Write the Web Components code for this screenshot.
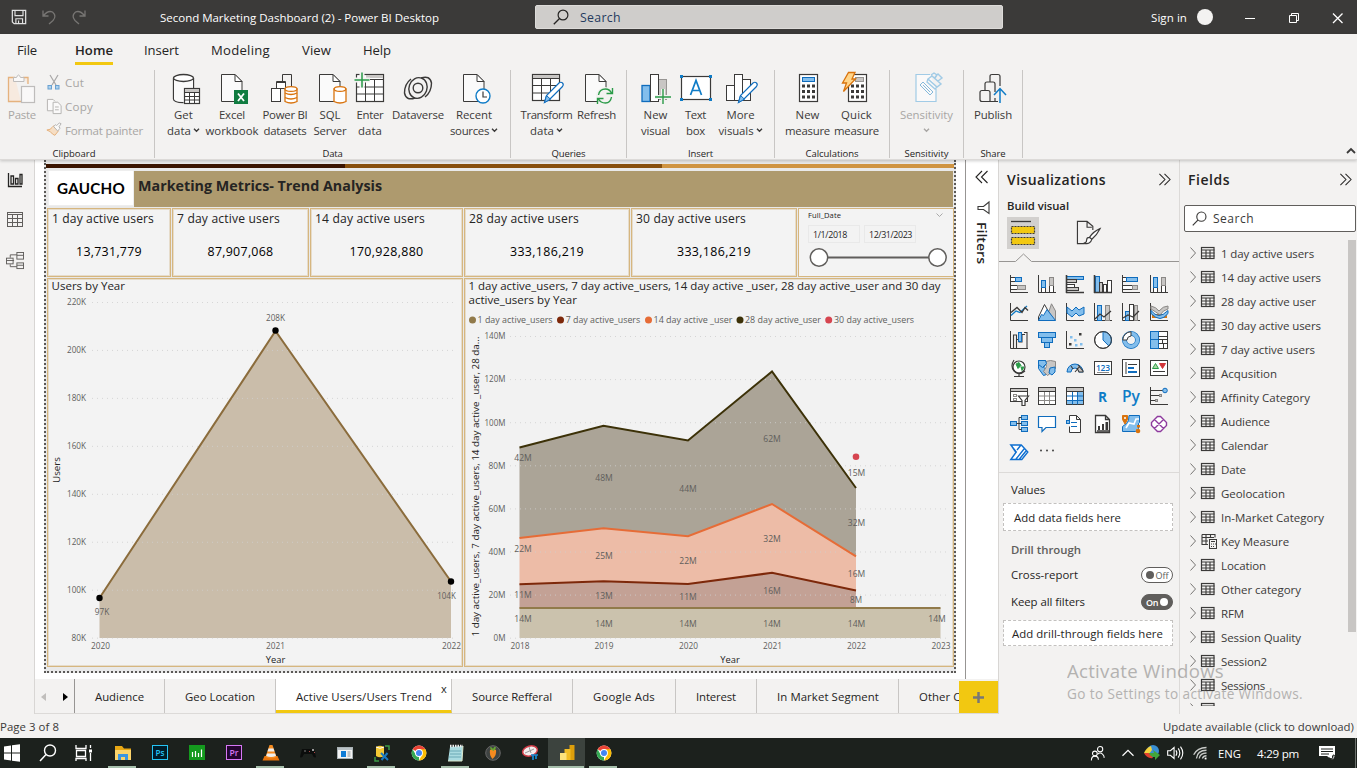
<!DOCTYPE html>
<html lang="en">
<head>
<meta charset="utf-8">
<title>Second Marketing Dashboard (2) - Power BI Desktop</title>
<style>
html,body{margin:0;height:768px;overflow:hidden;background:#f3f2f1}
body{font-family:"Open Sans","Noto Sans",sans-serif;font-size:11.5px;color:#252423}
</style>
</head>
<body>
<pb-window>
  <title-bar slot="title"></title-bar>
  <ribbon-bar slot="ribbon"></ribbon-bar>
  <view-rail slot="main"></view-rail>
  <report-area slot="main"></report-area>
  <viz-pane slot="main"></viz-pane>
  <fields-pane slot="main"></fields-pane>
  <status-bar slot="status"></status-bar>
  <task-bar slot="tasks"></task-bar>
  <activation-note slot="over"></activation-note>
</pb-window>
<script>
const K='#3b3a39',B='#0f6cbd',L='#83beec',G='#c8c6c4',W='#fff',O='#d9730d';
const r=(x,y,w,h,f='none',s=K,sw=1)=>`<rect x="${x}" y="${y}" width="${w}" height="${h}" fill="${f}" stroke="${s}" stroke-width="${sw}"/>`;
const p=(d,s=K,f='none',sw=1)=>`<path d="${d}" fill="${f}" stroke="${s}" stroke-width="${sw}"/>`;
const c=(x,y,q,f='none',s=K,sw=1)=>`<circle cx="${x}" cy="${y}" r="${q}" fill="${f}" stroke="${s}" stroke-width="${sw}"/>`;
const axis=p('M.5 0V17.5H18');
const page=(x)=>p(`M${x} 2.5h13.5l7 7V29.5h-20.5z`,K,'#fafafa')+p(`M${x+13.5} 2.5v7h7z`,K,'#fff');
const pencil=p('M13.5 30.5l2-7L28 11q2-1.500 3.500 0q1.500 1.500 0 3.500L19 27z',B,'#fff',1.2)+p('M13.500 30.500l2-7 4 3.700z',B,L);
const ICONS={
 save:[18,p('M1.500 1.500h15v15h-13l-2-2z','#e1e1e1','none',1.4)+p('M4.500 1.500v6h9v-6M5.500 16.500v-5.500h7.500v5.500M8.500 13v3','#e1e1e1','none',1.3)],
 undo:[16,p('M2 1.500v5.500h5.500M2.500 6.500Q7 1 11.500 3Q16 7 12 11.500L8 15','#777573','none',1.3)],
 redo:[16,p('M14 1.500v5.500h-5.500M13.500 6.500Q9 1 4.500 3Q0 7 4 11.500L8 15','#777573','none',1.3)],
 search:[16,c(10,6,4.900,'none','currentColor',1.2)+p('M6.500 9.500L.8 15.300','currentColor','none',1.3)],
 paste:[32,`<g opacity=".5">`+p('M9 5.500H2.500v24H15M22 12V5.500h-5',O,'#fbe3cf',1.3)+p('M7.500 9.500v-4h3q2-5 4 0h3.500v4z','#8a8886','#fff')+r(15.500,14.500,13,16,'#fff','#8a8886',1.2)+`</g>`],
 cut:[16,`<g opacity=".6">`+p('M4 1l6 10M12 1L6 11','#777','none',1.2)+r(2,11.500,3.500,3.500,L,B)+r(9.500,11.500,3.500,3.500,L,B)+`</g>`],
 copy:[18,`<g opacity=".6">`+p('M8 13.500H1.500V1.500h6l2 2','#8a8886','#fff')+p('M7.500 4.500h5l3.500 3.500v8.500H7.500zM9.500 9.500h4M9.500 12.500h4','#8a8886','#fff')+`</g>`],
 brush:[18,`<g opacity=".55">`+p('M9 4l5 6-4 5q-3-1-5-4L1 9q4 0 6-3z',O,'#f9cfa0')+p('M8.500 5L13 10l3-3-1.500-1.500L17 2l-2-1-3 3-1-1z','#777','#fff')+`</g>`],
 getdata:[32,p('M5.500 6v21q0 3.500 10 3.500M25.500 6v10','#3b3a39','none',1.3)+`<path d="M6 6v21q2 3 10 3V17h9V6z" fill="#fafafa"/>`+`<ellipse cx="15.500" cy="6" rx="10" ry="3.500" fill="#fff" stroke="${K}" stroke-width="1.300"/>`+r(16.500,16.500,15,15,'#fff',K,1.2)+r(17,17,14,3,G,'none')+p('M16.500 20.500h15M16.500 24.500h15M16.500 28h15M21.500 20v11M26.500 20v11')],
 excel:[32,page(5.5)+r(18,18,14,14,'#107c41','none')+p('M22 21.500l6 7.500M28 21.500l-6 7.500','#fff','none',1.8)],
 pbids:[32,r(2.500,16.500,9,13,'#fff')+r(7.500,10.500,9,6,'#fff')+p('M7.500 16v-6.500h9V30M13.500 9V2.500h9v12M11.500 16v14')+`<path d="M16 17v12.500q6 3 12 0V17z" fill="#fff" stroke="${O}" stroke-width="1.300"/><ellipse cx="22" cy="17" rx="6" ry="2.400" fill="#fff" stroke="${O}" stroke-width="1.300"/>`+p('M16 21q6 3 12 0M16 25.500q6 3 12 0',O,'none',1.3)],
 sql:[32,page(5.5)+`<path d="M20 17v12.500q6 3 12 0V17z" fill="#fff" stroke="${O}" stroke-width="1.300"/><ellipse cx="26" cy="17" rx="5.800" ry="2.400" fill="#fff" stroke="${O}" stroke-width="1.300"/>`],
 enter:[32,r(2.500,2.500,27,27,'#fff',K,1.2)+r(12,3,17,3,G,'none')+p('M2.500 15h27M2.500 22h27M11.500 7v23M20.500 7v23M12 7.500h18')+`<path d="M0 8h16M8 0v16" stroke="#f3f2f1" stroke-width="5"/>`+p('M.5 8h15M8 .5v15','#2a9b48','none',1.5)],
 dataverse:[32,`<ellipse cx="16" cy="16" rx="9" ry="10.500" fill="none" stroke="${K}" stroke-width="1.400" transform="rotate(20 16 16)"/>`+c(16,16,4.800,'none',K,1.400)+p('M19 6Q28 3 29.500 11Q29.500 20 23 25M13 26Q4 29 2.500 21Q2.500 12 9 7',K,'none',1.400)],
 recent:[32,page(5.5)+c(25,24,7,'#fff','#0f7cc7',1.4)+p('M25 19.500V25h4',K,'none',1.2)],
 transform:[32,r(1.500,2.500,27,26,'#fff',K,1.2)+r(2,3,26,3,G,'none')+p('M1.500 6.500h27M1.500 13.500h27M1.500 21h18M10.500 7v21M19.500 7v14')+pencil],
 refresh:[32,page(4.5)+`<circle cx="24" cy="24" r="9" fill="#f3f2f1"/>`+p('M17.500 23q1-6 7-6q4 0 6 4M31.500 16v5.500h-6M30.500 25q-1 6-6 6q-5 0-7-4M16.500 32v-5.500h6','#2a9b48','none',1.4)],
 newvisual:[32,r(2,13.500,8,16,L,B,1.300)+r(18.500,7.500,8,20,G,'#979593')+r(10.500,2.500,8,27,'#fff')+`<path d="M15 25h16M23 17v15" stroke="#f3f2f1" stroke-width="4"/>`+p('M15 25h16M23 17v15','#2a9b48','none',1.4)],
 textbox:[32,r(1.500,4.500,29,23,'#fff',K,1.200)+[[0,3],[29,3],[0,26],[29,26]].map(a=>r(a[0],a[1],3,3,'#0f7cc7','none')).join('')+p('M10.500 23L16 8.500 21.500 23M12.300 18.500h7.400','#0f7cc7','none',1.700)],
 more:[32,r(1.500,13.500,8,15,'#fff')+r(17.500,7.500,8,21,'#fff')+r(9.500,2.500,8,26,'#fff')+pencil],
 calc:[32,r(7.500,2.500,18,27,'#fff',K,1.200)+r(10.500,5.500,12,4,L,B)+[0,1,2].map(i=>[0,1,2].map(j=>r(10+j*5,12.500+i*5.500,3,3,K,'none')).join('')).join('')],
 quick:[32,r(7.500,2.500,18,27,'#fff',K,1.200)+r(14.500,5.500,8,4,G,'#979593')+[0,1,2].map(i=>[0,1,2].map(j=>r(10+j*5,12.500+i*5.500,3,3,K,'none')).join('')).join('')+p('M7.500.5h6.500l-3 6.500h3.500L2.500 19.500l3-8.500H1.500z',O,'#ffd58a',1.300)],
 sens:[32,`<g opacity=".6">`+p('M19 2.500H5v27h20V17','#6bb2df','#fff',1.200)+p('M9 13l3-3 10 10-3 3zM12 13l7 7','#3d94cc')+p('M17 7l4-3 9 8-4 3zM20 3l3-2 3 2-2 3M27 9l4-3-4-4-3 3M17 7l-1 3 8 7 2-2','#6bb2df','none',1.400)+`</g>`],
 publish:[32,p('M5 29.500q-2 0-2-2v-7q0-2 2-2h6q2 0 2 2v9zM8 18v-6q0-2 2-2h6q2 0 2 2v8M13 10V4.500q0-2 2-2h6q2 0 2 2V14M13 29.500h8M18 26v3.500',K,'none',1.200)+p('M23 31V17M17 23l6-6.500 6 6.500','#0f7cc7','none',1.500)],
 vreport:[16,p('M1.500 1v13.500H15M4 12V4h2.500v8zM8.500 12V6.500H11V12zM13 12V2.500h2V12z','#252423','none',1.300)],
 vtable:[16,r(.5,.5,15,14,'none','#605e5c')+p('M.5 2.500h15M.5 6.500h15M.5 10.500h15M5.500 2.500v12M10.500 2.500v12','#605e5c')],
 vmodel:[19,r(.5,6.500,7,6,'none','#605e5c')+r(11.500,.5,7,7,'none','#605e5c')+r(11.500,11.500,7,6,'none','#605e5c')+p('M.5 9h7M11.500 3.500h7M11.500 14h7M7.500 9h1M4.500 6V3h7M4.500 13v2.500h7','#605e5c')],
 chevR:[14,p('M1.500 1l6 6-6 6M7 1l6 6-6 6','#252423','none',1.100)],
 chevL:[14,p('M7 1L1 7l6 6M12.500 1l-6 6 6 6','#252423','none',1.100)],
 funnelR:[14,p('M12 1v11.500L6.500 8.500H1v-3h5.500z',K,'none',1.100)],
 caretUp:[10,p('M1 7l4-4 4 4',K,'none',1.800)],
 tablei:[14,r(.5,1.500,12.500,11,'none',K,1.200)+p('M.5 4h13M.5 7h13M.5 10h13M5 4v9M9 4v9',K,'none',1.100)],
 measi:[17,p('M1 1.500h13v3M1 1.500v10h6M1 4.500h12M1 8h6M5 2v9M9.500 2v3',K,'none',1.100)+r(8.500,6.500,7,9,'#f3f2f1')+p('M10 8.500h4M10 11h1M12 11h1M14 11h1M10 13.500h1M12 13.500h1')],
 arrow:[12,p('M3.500.500l5 5.500-5 5.500','#797775')],
 build:[26,p('M1 1.500h20',K,'none',1.300)+`<rect x="1.500" y="6.500" width="23" height="7" fill="#f2c811" stroke="${K}" stroke-width="1.200" stroke-dasharray="2 1"/><rect x="1.500" y="17.500" width="23" height="7" fill="#f2c811" stroke="${K}" stroke-width="1.200" stroke-dasharray="2 1"/>`],
 format:[26,p('M9 24.500H1.500V1.500h10l6 5v4M11.500 1.500v6h5',K,'none',1.200)+p('M25 9q-7 3-11 9l2.500 2Q22 15 25 9zM14 18q-3 0-3 3t-3 3q7 2 8.500-4',K,'#fff',1.200)],
};
const V=[
 axis+r(.5,2.500,5,4,W)+r(5.500,2.500,6,4,L,B)+r(.5,10.500,7,4,W)+r(7.500,10.500,8,4,G,'#8a8886'),
 axis+r(3.500,12.500,4,5,W)+r(3.500,5.500,4,7,L,B)+r(11.500,10.500,4,7,W)+r(11.500,2.500,4,8,G,'#8a8886'),
 axis+r(.5,1.500,17,3,L,B)+r(.5,4.500,10,3,G)+r(.5,9.500,8,3,W)+r(.5,12.500,12,3,G)+p('M0 17.500H18M.5 0v18',K,'none',1.600),
 axis+r(1.500,1.500,4,16,L,B)+r(5.500,7.500,3,10,G)+r(9.500,9.500,3,8,W)+r(13.500,5.500,4,12,W)+p('M0 17.500H18M.5 0v18',K,'none',1.600),
 axis+r(.5,2.500,4,4,W)+r(4.500,2.500,11,4,L,B)+r(.5,10.500,10,4,W)+r(10.500,10.500,5,4,G,'#8a8886'),
 axis+r(3.500,12.500,4,5,W)+r(3.500,2.500,4,10,L,B)+r(11.500,10.500,4,7,W)+r(11.500,2.500,4,8,G,'#8a8886'),
 axis+p('M1 12.500l5-4.500 4 1.500 7-6.500','#0f7cc7','none',1.300)+p('M1 9.500l6-5 5 5 3-5 3 3',K,'none',1.300),
 p('M8 17L13.500 .8 17.500 8V17z','#8a8886',G)+p('M.5 14L6.500 1.500l8 14-3 2H.5z',K,'#fff')+p('M.5 17.500l3-6 2 1 3.500-6 8.500 11z',B,L),
 axis+p('M1 4l5 4 4-4 3 3 5-3v7l-5 2-3-3-4 4-5-4z',B,L),
 axis+r(3.500,2.500,4,15,L,B)+r(11.500,2.500,4,15,G,'#8a8886')+p('M1 16l5-5 4 3 7-6',K,'none',1.300),
 axis+r(3.500,8.500,4,9,L,B)+r(7.500,1.500,4,16,W)+r(12.500,2.500,3,15,G,'#8a8886')+p('M1 15l5-3 5 2 6-6',K,'none',1.300),
 axis+r(2,11,15,4,O,'none')+p('M1 3q5 1 8 5q4-5 9-5v3q-5 1-8 6q-4-3-9-6z','#8a8886',G)+p('M1 7.500q4 5 8 5t9-5v3q-4 5-8 5t-9-5z',B,L),
 axis+p('M3.500 17V4h3v13M9 3.500h3V11H9zM14 1.500h3V17M6.500 8.500h3M12 3.500h3',K,'none',1.100)+r(8.500,1.500,3,9,L,B),
 r(.5,1.500,17,5,L,B)+r(3.500,6.500,11,5,L,B)+r(6.500,11.500,5,5,L,B),
 axis+[[3,12,K],[4,5,L],[8,8,L],[13,2,K],[14,12,L],[9,13,L]].map(a=>r(a[0],a[1],2.500,2.500,a[2],'none')).join(''),
 c(9,9,8.400,W)+p('M9 9V.6A8.400 8.400 0 0 1 14.900 15z',B,L)+c(9,9,8.400),
 c(9,9,6.500,'none',B,5)+c(9,9,6.500,'none',L,3.600)+p('M9 .8A8.300 8.300 0 0 0 .8 9H5A4.300 4.300 0 0 1 9 5z',K,'#fff'),
 r(.5,.5,17,17,W)+r(.5,.5,8,8,L,B)+r(.5,8.500,8,9,L,B)+p('M8.500 8.500h9M12.500 8v4.500M8.500 5.500h9M8.500 12.500h9M13.500 12.500v5'),
 c(9,8,6,W,K,1.200)+p('M6 5l3-1.500 2 3-3 3zM11 8h3l-2 3.500z','#2a9b48','#2a9b48')+p('M4 1Q0 7 4 12Q9 17 15 12M9 14.500V17M4 17.500h10',K,'none',1.200),
 p('M.500 1.500h7l1 3-3 4 4 2 2 4-6 2-5-7z',B,L)+p('M7.500 2.500l5-1 5 1v7l-4 4-4 3-4-4 3-5z','#8a8886',G)+p('M12 9l5-1v5l-3 3-3-2z',B,L)+p('M.500 1.500h7l1 3-4 4-4-3z',B,L),
 p('M1 13a8 8 0 0 1 16 0h-4a4 4 0 0 0-8 0z',B,L)+p('M5 7l2 3M9 13l5-6M12 6l5 6v1h-4l-2-4',K,G,1.100),
 r(.5,2.500,17,13,W)+`<text x="2" y="11.500" font-size="8.500" font-weight="600" fill="${B}" textLength="14">123</text>`+p('M3 13.500h12','#8a8886'),
 r(.5,.5,17,17,W)+p('M4 3v12M6 5.500h9',K)+p('M6 9h6M6 13h9',B,'none',2),
 r(.5,1.500,17,15,W)+p('M2.500 9.500l3-5 3 5z','#2a9b48','#a8d8a0')+p('M9.500 4.500h6l-3 5z','#d13438','#d13438')+p('M3 12.500h12'),
 r(.5,1.500,17,13,W)+r(1,2,16,2.500,G,'none')+p('M.5 4.500h17')+r(3.500,7.500,3,2,'none','#8a8886')+r(3.500,11.500,3,2,'none','#8a8886')+p('M8.500 9h10l-3.500 4.500v5h-3v-5z',K,'#fff',1.200),
 r(.5,.5,17,17,W)+r(1,1,16,3,G,'none')+p('M1 9h16M1 13.500h16M6.500 4.500v13M11.500 4.500v13','#8a8886')+p('M.5 4.500h17'),
 r(.5,.5,17,17,W)+r(1,1,16,3,G,'none')+r(12,5,5,12,L,'none')+r(1,13,16,4,L,'none')+p('M1 9h16M1 13.500h16M6.500 4.500v13M11.500 4.500v13',B)+p('M.5 4.500h17'),
 `<text x="4" y="15" font-size="15" font-weight="700" fill="#0f7cc7" textLength="9" lengthAdjust="spacingAndGlyphs">R</text>`,
 `<text x="0" y="14.500" font-size="15.500" font-weight="600" fill="#0f7cc7" textLength="18" lengthAdjust="spacingAndGlyphs">Py</text>`,
 axis+p('M1 3.500h12M1 8.500h9M1 13.500h5',K)+c(15,3.500,2.300,L,B)+r(9.500,7.500,2,2,G,'#8a8886')+r(5.500,12.500,2,2,G,'#8a8886'),
 r(.5,6.500,6,4,L,B)+r(11.500,.5,6,4,L,B)+r(11.500,6.500,6,4,L,B)+r(11.500,12.500,6,4,L,B)+p('M6.500 8.500h5M9 8.500v-6h2.500M9 8.500v6h2.500'),
 p('M.500 1.500h17v11H8l-4 4v-4h-3.500z',B,'#fff',1.200),
 p('M3.500 6V.500h7l4 4v13h-11v-6M10.500.500v4h4',K,'#fff')+r(.5,5.500,3,3,L,B)+p('M5 7.500h6M5 11.500h6',B),
 p('M1.500.500h10l4 4v13h-14zM11.500.500v4h4',K,'#fff',1.300)+r(4,11,2,4,K,'none')+r(8,9,2,6,K,'none')+r(11.500,7,2.500,8,K,'none')+p('M3 16h12',K,G,1.500),
 p('M7 .5h10.500v7l-1 1v5l-3 3H.500v-5l4-3 2-3z',B,L)+p('M4 13l3-5 5 1 2-5h3','#fff','none',1.600)+p('M3 9L.500 4.500V.500h5V4.500z',O,O)+c(3,3,1,'#fff','none')+c(16,16,2.300,O,'none')+r(15,10,3,2.500,O,'none'),
 p('M7.500 1.500h3l6 6v3l-6 6h-3l-6-6v-3zM4.500 4.500L13.500 13.500M13.500 4.500L4.500 13.500','#8e3a9e','#fff',1.400),
 p('M.800 2h10.500l6.500 7-6 7.500H.800l5.500-7.500zM6 16l8-10M1 2l5 7.500M9.500 16L16 8M11 2L7 7','#0f6fd0','#fff',1.400),
 `<circle cx="3" cy="7.500" r="1" fill="#444"/><circle cx="9" cy="7.500" r="1" fill="#444"/><circle cx="15" cy="7.500" r="1" fill="#444"/>`
];
V.forEach((s,i)=>ICONS['v'+i]=[18,s]);
const chrome=`<circle cx="12" cy="12" r="7.400" fill="#fff"/><path d="M12 12L5.600 8.300A7.400 7.400 0 0 1 18.400 8.300z" fill="#ea4335"/><path d="M12 8.300h6.400A7.400 7.400 0 0 1 12 19.400L15.200 13.800z" fill="#fbbc05"/><path d="M5.600 8.300L8.800 13.800 12 15.700v3.700A7.400 7.400 0 0 1 5.600 8.300z" fill="#34a853"/><circle cx="12" cy="12" r="3.900" fill="#fff"/><circle cx="12" cy="12" r="3" fill="#4285f4"/>`;
const sq=(bg,st,t)=>r(4.500,4.500,15,14,bg,st)+`<text x="7.500" y="15" font-size="8.500" font-weight="600" fill="${st}" textLength="9" lengthAdjust="spacingAndGlyphs">${t}</text>`;
const T={
 win:'<path d="M4 5.500l7-1v7H4zM12 4.300l8-1.100v8.300h-8zM4 12.500h7v7l-7-1zM12 12.500h8v8.300l-8-1.100z" fill="#fff"/>',
 find:c(14,9.500,5.500,'none','#fff',1.400)+p('M10 13.500L4 20','#fff','none',1.500),
 view:p('M4 4v3.500h10V4M4.500 9.500h9v6h-9zM4 20v-2.500h10V20M18.500 4v3M18.500 12v8','#fff','none',1.300)+r(17,8.500,3,3,'#fff','none'),
 folder:'<path d="M4 5h7l2 2.500h7V19H4z" fill="#e8a815"/><path d="M4 9h16v10H4z" fill="#fcd46b"/><path d="M7 13h10v6h-3v-3h-4v3H7z" fill="#3b96e2"/>',
 ps:sq('#001d2b','#25c4f5','Ps'),
 bars:r(4,4,16,15,'#149a1e','none')+p('M7.500 11v5M10.500 10v6M13.500 12v4M16.500 8.500v7.500','#fff','none',1.200),
 pr:sq('#250530','#d678f5','Pr'),
 vlc:'<path d="M5.500 15h13l2 4.500h-17z" fill="#e8740c"/><path d="M10.500 4h3l4 12q-5.500 3-11 0z" fill="#f58b1f"/><path d="M9.500 7.500h5l1 3h-7zM8 12.500h8.200l.8 2.500q-5 2-9.800 0z" fill="#eee"/>',
 pad:'<path d="M6 8h12l2 8q-2 2-4-3H8q-2 5-4 3z" fill="#0b0d0c"/><path d="M16 8h2v2h-2z" fill="#999"/><path d="M13 10h1v1h-1zM18 11h1v1h-1z" fill="#a44"/><path d="M8 9h2v2H8z" fill="#444"/>',
 app:r(4.500,6.500,15,11,'#f4f4f4','#a9b2b5')+r(5,7,14,2,'#b9c2c6','none')+r(8,10,5,6,'#0f7cd6','none')+p('M14.500 11h3M14.500 13h3M14.500 15h3','#8a9499'),
 tools:'<path d="M6 6q4-2.500 8 0v9q-4 2.500-8 0z" fill="#f5c934"/><path d="M6 6q4 2.500 8 0" stroke="#fff" fill="none"/><path d="M11 12l7 7M17.500 12l-6 7" stroke="#1b7ac2" stroke-width="2"/><path d="M15 5h4v4M9 20H5v-4" stroke="#3b9b45" stroke-width="1.500" fill="none"/>',
 chrome, chrome2:chrome,
 note:'<path d="M6 6l13-1-1 15H4z" fill="#a9dbe0"/><path d="M6 10h11M6 13h11M5 16h12" stroke="#6ba9b5"/><path d="M6 5h13" stroke="#eee" stroke-width="2.500" stroke-dasharray="1.500 1"/><path d="M4 20h14l1-15" stroke="#dae5c9" fill="none"/>',
 fl:c(12,12,7.300,'#3e4342','#666')+'<path d="M9 9q3-2 6 0q1 5-3.500 9q-3.500-4-2.500-9z" fill="#f58a1f"/><path d="M9 6q2 0 3 2q2-4 3-1l-2.500 3-3-2z" fill="#66a832"/>',
 snip:'<ellipse cx="12" cy="10" rx="7.500" ry="5" transform="rotate(-15 12 10)" fill="#f5eded" stroke="#cf3c47" stroke-width="1.500"/><path d="M11 6l2 6M7 12l9-4" stroke="#999"/><path d="M13 14h7M15 14v5M18 14v4" stroke="#1788d0" stroke-width="1.700"/>',
 pbi:'<path d="M14.500 4h5v15h-5z" fill="#dd9f0b"/><path d="M9.500 8h6v11h-6z" fill="#f1bd24"/><path d="M5 12h6.500v7H5z" fill="#fce27b"/>',
 people:c(15,7,3,'none','#fff',1.200)+c(9,12,2.700,'none','#fff',1.200)+p('M5 20q0-5 4-5t4 4M12 13q3-3 6 0q2 2 1.500 4','#fff','none',1.200),
 up:p('M6 15l6-6 6 6','#fff','none',1.300),
 idm:'<circle cx="13" cy="10" r="6" fill="#3a8fd2"/><path d="M4 12q2-5 7-7l1 4-3 4z" fill="#f4d33e"/><path d="M4 12q3 6 9 5l-3-5z" fill="#e1402f"/><path d="M9 12h5l-1-3 7 5-5 5v-3q-5 0-6-4z" fill="#43a53a"/>',
 sound:p('M4 9.500h3l4-3.500v12l-4-3.500H4zM13 9q2 3 0 6M15.500 7q3.500 5 0 10M18 5q5 7 0 14','#fff','none',1.200),
 wifi:p('M4 14q4-8 14-8M7 18q1-9 11-9M10 18q1-6 8-6M13.500 18q1-3 4.500-3','#c8cbc8','none',1.400)+r(16,17,2,2,'#fff','none'),
 notif:'<path d="M4 5h16v10h-3v4l-5-4H4z" fill="#fff"/><path d="M6 8h12M6 10.500h12M6 13h8" stroke="#1c211d"/><path d="M14 17q4 3 4-3q4 0 0 5z" fill="#ddd" stroke="#1c211d"/>'
};
for(const k in T)ICONS['t-'+k]=[24,T[k]];

const tx=(t,w,s,st='')=>`<fit-text w="${w}" style="font-size:${s}px;${st}">${t}</fit-text>`;
const ic=(n,s,st='')=>`<pb-icon name="${n}" ${s?`size="${s}"`:''} style="${st}"></pb-icon>`;
function el(name,css,html){
  customElements.define(name,class extends HTMLElement{
    constructor(){super();this.attachShadow({mode:'open'})}
    connectedCallback(){this.shadowRoot.innerHTML=`<style>:host{display:block;box-sizing:border-box}*{box-sizing:border-box}${css}</style>${typeof html==='function'?html(this):html}`}
  });
}
const at=(e,n,d='')=>e.getAttribute(n)??d;

el('pb-window',`:host{display:grid;grid-template-rows:34px 126px 554px 24px 30px;width:1357px;height:768px;position:relative;overflow:hidden}
.main{display:flex;min-height:0;overflow:hidden}`,
`<slot name="title"></slot><slot name="ribbon"></slot><div class="main"><slot name="main"></slot></div><slot name="status"></slot><slot name="tasks"></slot><slot name="over"></slot>`);

el('pb-icon',`:host{display:inline-flex;flex:none}svg{display:block;overflow:visible}`,e=>{const [b,s]=ICONS[at(e,'name')];const z=at(e,'size',b);return `<svg width="${z}" height="${z}" viewBox="0 0 ${b} ${b}">${s}</svg>`});

el('title-bar',`:host{display:flex;align-items:center;background:#3b3a39;color:#fff;height:34px}
.quick{display:flex;gap:14px;padding-left:11px;width:160px}.box{margin-left:96px;width:468px;height:24px;background:#cfcdcb;border:1px solid #dddbd9;border-radius:2px;display:flex;align-items:center;color:#252423;padding-left:17px;gap:11px}
.me{width:16px;height:16px;border-radius:50%;background:#f3f2f1;margin:0 32px 0 10px}svg{display:block;overflow:visible}`,
`<div class="quick">${ic('save',16)}${ic('undo')}${ic('redo')}</div>${tx('Second Marketing Dashboard (2) - Power BI Desktop',279,11.5,'margin-top:1px')}
<div class="box">${ic('search',16)}${tx('Search',41,12.3,'color:#243a5e')}</div>${tx('Sign in',36,11.5,'margin-left:148px')}<div class="me"></div>
<svg width="104" height="14" viewBox="0 0 104 14" fill="none" stroke="#fff"><path d="M0 8.500h10M44.500 5.500h7v7h-7zM46.500 5V3.500h7v7h-2"/><path d="M88 3.500l9.500 9.500M97.500 3.500L88 13" stroke-width="1.300"/></svg>`);

el('ribbon-button',`:host{display:flex;flex-direction:column;align-items:center;padding-top:4px;color:#3b3a39}
.l{height:16px;display:flex;align-items:center;gap:2px}.l:first-of-type{margin-top:2px}`,e=>{
 e.style.width=at(e,'w')+'px';if(e.hasAttribute('off'))e.style.color='#a8a6a4';
 const a=at(e,'lines').split('|');const ch='<svg width="7" height="5" viewBox="0 0 7 5"><path d="M1 .8l2.500 2.500L6 .8" fill="none" stroke="currentColor" stroke-width="1.400"/></svg>';
 return ic(at(e,'icon'),32)+a.map(x=>{const [t,w,k]=x.split('~');return `<div class="l">${t?tx(t,w,11.4):''}${k?ch:''}</div>`}).join('')});
el('ribbon-group',`:host{display:grid;grid-template-rows:1fr 14px;height:88px;border-right:1px solid #c8c6c4;position:relative}
.b{display:flex;justify-content:center;margin-top:-2px}.c{display:flex;justify-content:center;align-items:center;padding-top:5px}`,e=>{e.style.width=at(e,'w')+'px';return `<div class="b"><slot></slot></div><div class="c">${tx(at(e,'label'),at(e,'lw'),9.5,at(e,'label')=='Clipboard'?'margin-left:-6px':'')}</div>`});
const rb=(i,w,l,o='')=>`<ribbon-button icon="${i}" w="${w}" lines="${l}" ${o}></ribbon-button>`;
el('clip-tools',`:host{display:flex;width:154px;color:#a8a6a4}.s{display:flex;flex-direction:column;width:106px;padding:2px 0 0 2px}.s div{height:24px;display:flex;align-items:center;gap:1px}.s pb-icon{width:18px}`,
 rb('paste',44,'Paste~28','off')+`<div class="s"><div>${ic('cut',16)}${tx('Cut',19,11.6)}</div><div>${ic('copy',17)}${tx('Copy',28,11.6)}</div><div>${ic('brush',16)}${tx('Format painter',78,11.6)}</div></div>`);
el('ribbon-bar',`:host{background:#f3f2f1;display:flex;flex-direction:column;height:126px;border-bottom:1px solid #dcdad8;box-shadow:0 1px 3px #0003;z-index:2;position:relative}
nav{display:flex;height:36px;padding-left:17px}nav div{display:flex;align-items:center;height:32px;border-bottom:3px solid transparent;padding-top:2px}nav .on{border-color:#f2c811;color:#252423;height:31px;padding-top:3px}
.g{display:flex}`,
`<nav>${[['File',20,38],['Home',38,31],['Insert',35,32],['Modeling',59,32],['View',29,32],['Help',28,0]].map(a=>`<div class="${a[0]=='Home'?'on':''}" style="margin-right:${a[2]}px">${tx(a[0],a[1],13.1,a[0]=='Home'?'font-weight:600':'')}</div>`).join('')}</nav>
<div class="g">
<ribbon-group w="155" label="Clipboard" lw="43"><clip-tools></clip-tools></ribbon-group>
<ribbon-group w="356" label="Data" lw="20">${rb('getdata',44,'Get~19|data~24~1')}${rb('excel',53,'Excel~26|workbook~53')}${rb('pbids',53,'Power BI~45|datasets~43')}${rb('sql',37,'SQL~21|Server~33')}${rb('enter',43,'Enter~27|data~24')}${rb('dataverse',53,'Dataverse~52')}${rb('recent',59,'Recent~36|sources~39~1')}</ribbon-group>
<ribbon-group w="116" label="Queries" lw="34">${rb('transform',56,'Transform~52|data~24~1')}${rb('refresh',44,'Refresh~39')}</ribbon-group>
<ribbon-group w="148" label="Insert" lw="25">${rb('newvisual',41,'New~24|visual~29')}${rb('textbox',39,'Text~21|box~19')}${rb('more',51,'More~28|visuals~35~1')}</ribbon-group>
<ribbon-group w="115" label="Calculations" lw="53">${rb('calc',49,'New~24|measure~45')}${rb('quick',49,'Quick~31|measure~45')}</ribbon-group>
<ribbon-group w="74" label="Sensitivity" lw="44">${rb('sens',58,'Sensitivity~53|~0~1','off')}</ribbon-group>
<ribbon-group w="59" label="Share" lw="25">${rb('publish',44,'Publish~38')}</ribbon-group>
</div>${ic('caretUp',10,'position:absolute;right:1px;bottom:3px')}`);

el('view-rail',`:host{width:35px;border-right:1px solid #d8d6d4;background:#f3f2f1;display:flex;flex-direction:column;align-items:center;padding:12px 4px 0 0;gap:24px}`,ic('vreport',16)+ic('vtable',16)+ic('vmodel',18));

el('metric-card',`:host{background:#f3f3f3;border:1px solid #d6b67f;outline:1px solid #e6dccb;outline-offset:-2px;display:flex;flex-direction:column}
.v{display:flex;justify-content:center;color:#000;margin-top:14px;height:20px;align-items:center}.h{height:18px;display:flex;align-items:center;padding-left:4px}`,
e=>`<div class="h">${tx(at(e,'label'),at(e,'lw'),12.1)}</div><div class="v">${tx(at(e,'value'),at(e,'vw'),12.4)}</div>`);
el('date-slicer',`:host{background:#f3f3f3;border:1px solid #d6b67f;display:flex;flex-direction:column;padding:0 10px 0 9px}
.h{display:flex;justify-content:space-between;align-items:center;height:11px}.d{display:flex;gap:4px;margin-top:5px}.d div{width:52px;height:18px;border:1px solid #e9e9e9;display:flex;align-items:center;padding-left:4px}svg{display:block;overflow:visible}.t{margin-top:5px}`,
`<div class="h">${tx('Full_Date',33,7.6)}<svg width="7" height="5"><path d="M.5 1.500l3 3 3-3" fill="none" stroke="#a9a9a9"/></svg></div><div class="d"><div>${tx('1/1/2018',34,8.9)}</div><div>${tx('12/31/2023',43,8.9)}</div></div>
<svg class="t" width="138" height="19" viewBox="808 248 138 19"><path d="M819 257.500H937" stroke="#605e5c" stroke-width="2"/><g fill="#fff" stroke="#605e5c" stroke-width="1.500"><circle cx="819" cy="257.500" r="8.700"/><circle cx="937.500" cy="257.500" r="8.700"/></g></svg>`);

const ct=(x,y,t,w,o={})=>`<text x="${x}" y="${y}" text-anchor="${o.a||'middle'}" font-size="${o.s||8.8}" fill="${o.f||'#605e5c'}" ${w?`textLength="${w}" lengthAdjust="spacingAndGlyphs"`:''} ${o.x||''}>${t}</text>`;
const grid=(x1,x2,ys)=>ys.map(y=>`<path d="M${x1} ${y}H${x2}" stroke="#cfcfcf" stroke-width="1" stroke-dasharray="1 4" opacity=".8"/>`).join('');
el('users-chart',`:host{background:#f3f3f3;border:1px solid #d6b67f;outline:1px solid #e6dccb;outline-offset:-2px}svg{display:block;margin:-1px}`,()=>{
 const ys=[...Array(8)].map((_,i)=>302.5+i*47.95);
 return `<svg width="416" height="389" viewBox="47 278 416 389">`+ct(51.5,290,'Users by Year',73.5,{a:'start',s:10.4,f:'#252423'})+
 `<path d="M99.500 598L275.500 331 451 581.500V638H99.500z" fill="#8b6c3c" fill-opacity=".4"/>`+grid(92,456,ys)+
 `<path d="M99.500 598L275.500 331 451 581.500" fill="none" stroke="#8b6c3c" stroke-width="2"/>`+
 [[99.5,598],[275.5,330.5],[451,581.5]].map(a=>`<circle cx="${a[0]}" cy="${a[1]}" r="3.200"/>`).join('')+
 ['220K','200K','180K','160K','140K','120K','100K','80K'].map((t,i)=>ct(86,ys[i]+2.800,t,t=='80K'?14.5:19,{a:'end'})).join('')+
 ct(275.5,321,'208K',19)+ct(102,615,'97K',14.5)+ct(446.5,599,'104K',18.5)+
 ct(100.5,649,'2020',19)+ct(275.5,649,'2021',19)+ct(451.5,649,'2022',19)+ct(275.5,663,'Year',19.5,{s:9.5,f:'#252423'})+
 ct(60,470,'Users',26,{s:9,f:'#252423',x:'transform="rotate(-90 60 470)"'})+`</svg>`});
el('active-chart',`:host{background:#f2f2f2;border:1px solid #d6b67f;outline:1px solid #e6dccb;outline-offset:-2px}svg{display:block;margin:-1px}`,()=>{
 const X=[519.5,603.5,688,772,856,940.5],ys=[...Array(8)].map((_,i)=>336.5+i*43.1);
 const d1=[608,608,608,608,608,608],d7=[584.3,581.2,584,572.8,590.5],d14=[538,528.3,536.3,504,556.3],d28=[447.5,425.7,440.5,371.5,488];
 const pt=a=>a.map((y,i)=>X[i]+' '+y);
 const area=(a,b,f)=>`<path d="M${pt(a).join('L')}L${pt(b.slice(0,a.length)).reverse().join('L')}z" fill="${f}" fill-opacity=".4"/>`;
 const ln=(a,s)=>`<path d="M${pt(a).join('L')}" fill="none" stroke="${s}" stroke-width="2"/>`;
 const lab=(a)=>a.map(q=>ct(q[0],q[1]+3,q[2],q[2].length<3?12:17.5)).join('');
 return `<svg width="490" height="389" viewBox="464 278 490 389">`+
 ct(468.5,290,'1 day active_users, 7 day active_users, 14 day active _user, 28 day active_user and 30 day',472,{a:'start',s:10.4,f:'#252423'})+ct(468.5,304,'active_users by Year',108.5,{a:'start',s:10.4,f:'#252423'})+
 [[472.5,'#917a4a','1 day active_users',477.5,75],[560.5,'#7d280a','7 day active_users',565.7,74.5],[648.5,'#e66c37','14 day active _user',653.5,79],[740,'#3c3108','28 day active_user',745,76],[828.7,'#d64550','30 day active_users',834,80]].map(a=>`<circle cx="${a[0]}" cy="320" r="3.500" fill="${a[1]}"/>`+ct(a[3],323,a[2],a[4],{a:'start',s:9})).join('')+
 area(d28,d14,'#413010')+area(d14,d7,'#e66c37')+area(d7,d1,'#7d280a')+area(d1,[638,638,638,638,638,638],'#917a46')+grid(510,948,ys)+
 ln(d28,'#3c3108')+ln(d14,'#e66c37')+ln(d7,'#7d280a')+ln(d1,'#917a4a')+`<circle cx="856" cy="456.700" r="3.300" fill="#d64550"/>`+
 ['140M','120M','100M','80M','60M','40M','20M','0M'].map((t,i)=>ct(505.5,ys[i]+2.800,t,[0,0,12,17,21][t.length],{a:'end'})).join('')+
 X.map((x,i)=>ct(x+.5,649,2018+i,19)).join('')+ct(730,663,'Year',19.5,{s:9.5,f:'#252423'})+
 lab([[523,457.5,'42M'],[523,548.500,'22M'],[523,594.500,'11M'],[523,619,'14M'],[604,477.500,'48M'],[604,555.500,'25M'],[604,595.500,'13M'],[604,623.500,'14M'],[688,488.500,'44M'],[688,560.500,'22M'],[688,596.500,'11M'],[688,623.500,'14M'],[772,438.500,'62M'],[772,538.500,'32M'],[772,590.500,'16M'],[772,623.500,'14M'],[856.500,472.500,'15M'],[856.500,522.500,'32M'],[856.500,573.500,'16M'],[856,599.500,'8M'],[856.500,623.500,'14M'],[937,619,'14M']])+
 ct(478.5,486.5,'1 day active_users, 7 day active_users, 14 day active _user, 28 da...',300,{s:9,f:'#252423',x:'transform="rotate(-90 478.500 486.500)"'})+`</svg>`});

el('filters-pane',`:host{width:34px;border-left:1px solid #979593;background:#fff;border-right:1px solid #d8d6d4;display:flex;flex-direction:column;align-items:center;padding-top:10px}`,ic('chevL',14)+ic('funnelR',14,'margin:17px 0 0 3px')+`<svg width="18" height="50" viewBox="0 0 18 50" style="margin-top:5px"><text transform="translate(4 2) rotate(90)" font-size="13" font-weight="600" fill="#252423" textLength="42" lengthAdjust="spacingAndGlyphs">Filters</text></svg>`);

el('page-tab',`:host{display:flex;align-items:center;height:35px;border-right:1px solid #c8c6c4;background:#f3f2f1;flex:none;position:relative}
:host([on]){background:#fff;border-bottom:4px solid #f2c811;padding-top:4px}.x{position:absolute;right:4px;top:3px;line-height:14px}`,e=>{e.style.width=at(e,'w')+'px';e.style.paddingLeft='20px';return tx(at(e,'t'),at(e,'tw'),11.4)+(e.hasAttribute('on')?`<span class="x">${tx('x',6,11)}</span>`:'')});
el('page-tabs',`:host{display:flex;position:relative;height:35px;background:#f3f2f1;border-bottom:1px solid #dcdad8;border-right:1px solid #d8d6d4;overflow:hidden}
.n{width:40px;border-right:1px solid #979593;display:flex;align-items:center;justify-content:space-between;padding:2px 6px 0 6px;flex:none}
.add{position:absolute;right:0;top:2px;width:39px;height:32px;background:#f2c811;display:flex;align-items:center;justify-content:center}`,
`<div class="n"><svg width="5" height="8"><path d="M5 0v8L0 4z" fill="#c0bebc"/></svg><svg width="5" height="8"><path d="M0 0v8l5-4z" fill="#000"/></svg></div>`+
[['Audience',49,90],['Geo Location',70,111],['Active Users/Users Trend',136,176,'on'],['Source Refferal',80,121],['Google Ads',62,103],['Interest',40,81],['In Market Segment',102,142],['Other Category',82,122]].map(a=>`<page-tab t="${a[0]}" tw="${a[1]}" w="${a[2]}" ${a[3]||''}></page-tab>`).join('')+
`<div class="add"><svg width="11" height="11"><path d="M5.500 0v11M0 5.500h11" stroke="#797775" stroke-width="2.500"/></svg></div>`);

el('report-area',`:host{width:964px;display:grid;grid-template-rows:519px 35px;background:#fff}
.top{display:flex;justify-content:space-between;min-height:0}
.page{margin-left:9px;width:912px;height:513px;border:2px dotted #5b5957;border-top:none;background:#e9e9e9;padding-top:4px;display:flex;flex-direction:column}
.band{height:4px;flex:none;display:grid;grid-template-columns:299px 317px 1fr}
.head{display:flex;height:36px;margin:2px 0 0 2px;flex:none}.logo{width:86px;background:#fff;border:1px solid #eee;display:flex;align-items:center;justify-content:center;height:36px}
.ban{flex:1;background:#ae9a6e;margin:1px 0 0 0;height:36px;padding:5px 0 0 4px;margin-right:1px}
.cards{display:grid;grid-template-columns:124px 137px 153px 166px 166px 156px;gap:1px;margin:2px 0 0 1px;height:69px;flex:none;width:907px}
.charts{display:grid;grid-template-columns:416px 490px;gap:1px;margin:1px 0 0 1px;height:389px;width:907px}`,
`<div class="top"><div class="page"><div class="band"><i style="background:#3a1400"></i><i style="background:#874f0d"></i><i style="background:#cf9442"></i></div>
<div class="head"><div class="logo">${tx('GAUCHO',68,15.2,'font-family:Lato,sans-serif;font-weight:700;color:#000')}</div><div class="ban">${tx('Marketing Metrics- Trend Analysis',244,14.3,'font-weight:700')}</div></div>
<div class="cards">${[['1 day active users',102,'13,731,779',66],['7 day active users',103,'87,907,068',66],['14 day active users',110,'170,928,880',74],['28 day active users',110,'333,186,219',74],['30 day active users',110,'333,186,219',74]].map(a=>`<metric-card label="${a[0]}" lw="${a[1]}" value="${a[2]}" vw="${a[3]}"></metric-card>`).join('')}<date-slicer></date-slicer></div>
<div class="charts"><users-chart></users-chart><active-chart></active-chart></div></div><filters-pane></filters-pane></div><page-tabs></page-tabs>`);

el('toggle-pill',`:host{width:32px;height:16px;border-radius:8px;border:1px solid #605e5c;background:#fff;display:flex;align-items:center;justify-content:center;gap:2px;color:#605e5c}
i{width:8px;height:8px;border-radius:50%;background:#605e5c}:host([on]){background:#605e5c;color:#fff}:host([on]) i{background:#fff;order:2}`,e=>`<i></i>${e.hasAttribute('on')?tx('On',12,9,'font-weight:600'):tx('Off',13,9)}`);
el('drop-well',`:host{width:170px;background:#fff;border:1px dashed #c3c1bf;display:flex;align-items:center;margin-left:4px}`,'<slot></slot>');
el('viz-pane',`:host{width:180px;display:flex;flex-direction:column;background:#f3f2f1}
.h{display:flex;justify-content:space-between;padding:0 8px;height:38px;align-items:center}.m{display:flex;padding-left:8px;height:32px;margin-top:3px}.tile{width:32px;height:32px;background:#d2d0ce;display:flex;align-items:center;justify-content:center}
.notch{display:block;margin-top:4px}.g{display:grid;grid-template-columns:repeat(6,18px);gap:10px;padding:12px 0 11px 11px;border-bottom:1px solid #dcdad8}
.row{display:flex;justify-content:space-between;align-items:center;padding:0 6px 0 12px}.row fit-text{margin-top:-2px}`,
`<div class="h">${tx('Visualizations',99,14,'font-weight:600')}${ic('chevR',13)}</div>
<div style="padding-left:8px;height:16px;display:flex;align-items:center">${tx('Build visual',62,11.3,'font-weight:600;margin-top:-2px')}</div>
<div class="m"><div class="tile">${ic('build',26)}</div><div style="margin:3px 0 0 37px">${ic('format',25)}</div></div>
<svg class="notch" width="180" height="10" viewBox="0 0 180 10"><path d="M0 8.500H16.500L24.500 1l8 7.500H180" fill="none" stroke="#979593"/></svg>
<div class="g">${V.map((_,i)=>ic('v'+i,18)).join('')}</div>
<div class="row" style="height:30px;padding-top:4px">${tx('Values',34,11.4)}</div>
<drop-well style="height:28px;padding-left:10px">${tx('Add data fields here',107,11.4)}</drop-well>
<div class="row" style="height:36px;padding-top:2px">${tx('Drill through',70,11.4,'font-weight:600;color:#605e5c')}</div>
<div class="row" style="height:16px">${tx('Cross-report',67,11.4)}<toggle-pill></toggle-pill></div>
<div class="row" style="height:16px;margin:11px 0 10px">${tx('Keep all filters',74,11.4)}<toggle-pill on></toggle-pill></div>
<drop-well style="height:26px;padding-left:8px">${tx('Add drill-through fields here',151,11.4)}</drop-well>`);

el('field-item',`:host{display:flex;align-items:center;height:24px;padding-left:7px;color:#3b3a39;flex:none}pb-icon+pb-icon{width:17px;margin:0 3px 0 2px}`,e=>ic('arrow',12)+ic(at(e,'t')=='Key Measure'?'measi':'tablei')+tx(at(e,'t'),at(e,'w'),11.5));
el('fields-pane',`:host{width:178px;border-left:1px solid #dcdad8;background:#f3f2f1;display:flex;flex-direction:column}
.h{display:flex;justify-content:space-between;padding:0 5px 0 8px;height:38px;align-items:center}
.s{height:27px;margin:7px 1px 0 4px;border:1px solid #605e5c;border-radius:2px;background:#fff;display:flex;align-items:center;gap:6px;padding-left:7px;color:#3b3a39;flex:none}
.b{display:flex;margin-top:8px;height:466px}.l{flex:1;padding-top:1px;display:flex;flex-direction:column;overflow:hidden}.bar{width:8px;height:392px;background:#c8c6c4;margin-right:1px}`,
`<div class="h">${tx('Fields',42,14,'font-weight:600')}${ic('chevR',13)}</div><div class="s">${ic('search',15)}${tx('Search',41,12)}</div>
<div class="b"><div class="l">${[['1 day active users',93],['14 day active users',100],['28 day active user',95],['30 day active users',100],['7 day active users',94],['Acqusition',56],['Affinity Category',89],['Audience',49],['Calendar',47],['Date',25],['Geolocation',64],['In-Market Category',103],['Key Measure',68],['Location',45],['Other category',80],['RFM',23],['Session Quality',80],['Session2',46],['Sessions',44],['Social',33]].map(a=>`<field-item t="${a[0]}" w="${a[1]}"></field-item>`).join('')}</div><div class="bar"></div></div>`);
el('status-bar',`:host{display:flex;justify-content:space-between;align-items:center;background:#f3f2f1;padding:1px 3px 0 0;color:#3b3a39}`,tx('Page 3 of 8',59,11.4)+tx('Update available (click to download)',191,11.4));
el('task-item',`:host{width:37px;height:30px;display:flex;align-items:center;justify-content:center;border-bottom:2px solid transparent;position:relative}
pb-icon{margin-top:2px}i{position:absolute;left:4px;right:5px;bottom:-2px;height:2px;background:#a6bfab}:host([on]){background:#3c433e}:host([on]) i{left:0;right:1px}`,e=>ic('t-'+at(e,'n'),24)+(e.hasAttribute('run')?'<i></i>':''));
el('task-bar',`:host{display:flex;background:#1c211d;color:#fff;align-items:center;overflow:hidden}.a,.b{display:flex;align-items:center}.a task-item{width:36px}.a{margin-left:-6px}.b{margin-left:2px}.t{margin-left:auto;display:flex;align-items:center;border-right:1px solid #6b706c;margin-right:1px;height:30px}`,
`<div class="a">${['win','find','view'].map(n=>`<task-item n="${n}"></task-item>`).join('')}</div><div class="b">${['folder','ps','bars','pr','vlc','pad','app','tools','chrome','note','fl','snip','pbi','chrome2'].map(n=>`<task-item n="${n}" ${/folder|vlc|tools|note|pbi|chrome2/.test(n)?'run':''} ${n=='pbi'?'on':''}></task-item>`).join('')}</div>
<div class="t">${ic('t-people',21,'margin-right:9px')}${ic('t-up',22,'margin-right:1px')}${ic('t-idm',24)}${ic('t-sound',22,'margin-right:4px')}${ic('t-wifi',22,'margin-right:6px')}${tx('ENG',23,11.3,'margin-right:16px')}${tx('4:29 pm',42,11.6,'margin-right:16px')}${ic('t-notif',24,'margin-right:16px')}</div>`);
el('activation-note',`:host{position:absolute;left:1067px;top:657px;color:#8a8886;opacity:.6;pointer-events:none;z-index:5;display:flex;flex-direction:column}div{height:26px;display:flex;align-items:center}div+div{height:20px}`,
`<div>${tx('Activate Windows',157,18.6)}</div><div>${tx('Go to Settings to activate Windows.',236,13.6)}</div>`);

/* Text run whose tracking is adjusted so that it fills the width given by its "w" attribute. */
customElements.define('fit-text',class extends HTMLElement{
  connectedCallback(){
    if(!this.shadowRoot)this.attachShadow({mode:'open'}).innerHTML='<style>:host{display:inline-block;white-space:pre;flex:none}span{display:inline-block}</style><span><slot></slot></span>';
    const w=+this.getAttribute('w'),s=this.shadowRoot.querySelector('span'),n=this.textContent.length;
    if(!w||!n)return;
    const nat=s.getBoundingClientRect().width;
    s.style.letterSpacing=((w-nat)/n).toFixed(3)+'px';
    this.style.width=w+'px';
  }
});
</script>
</body>
</html>
